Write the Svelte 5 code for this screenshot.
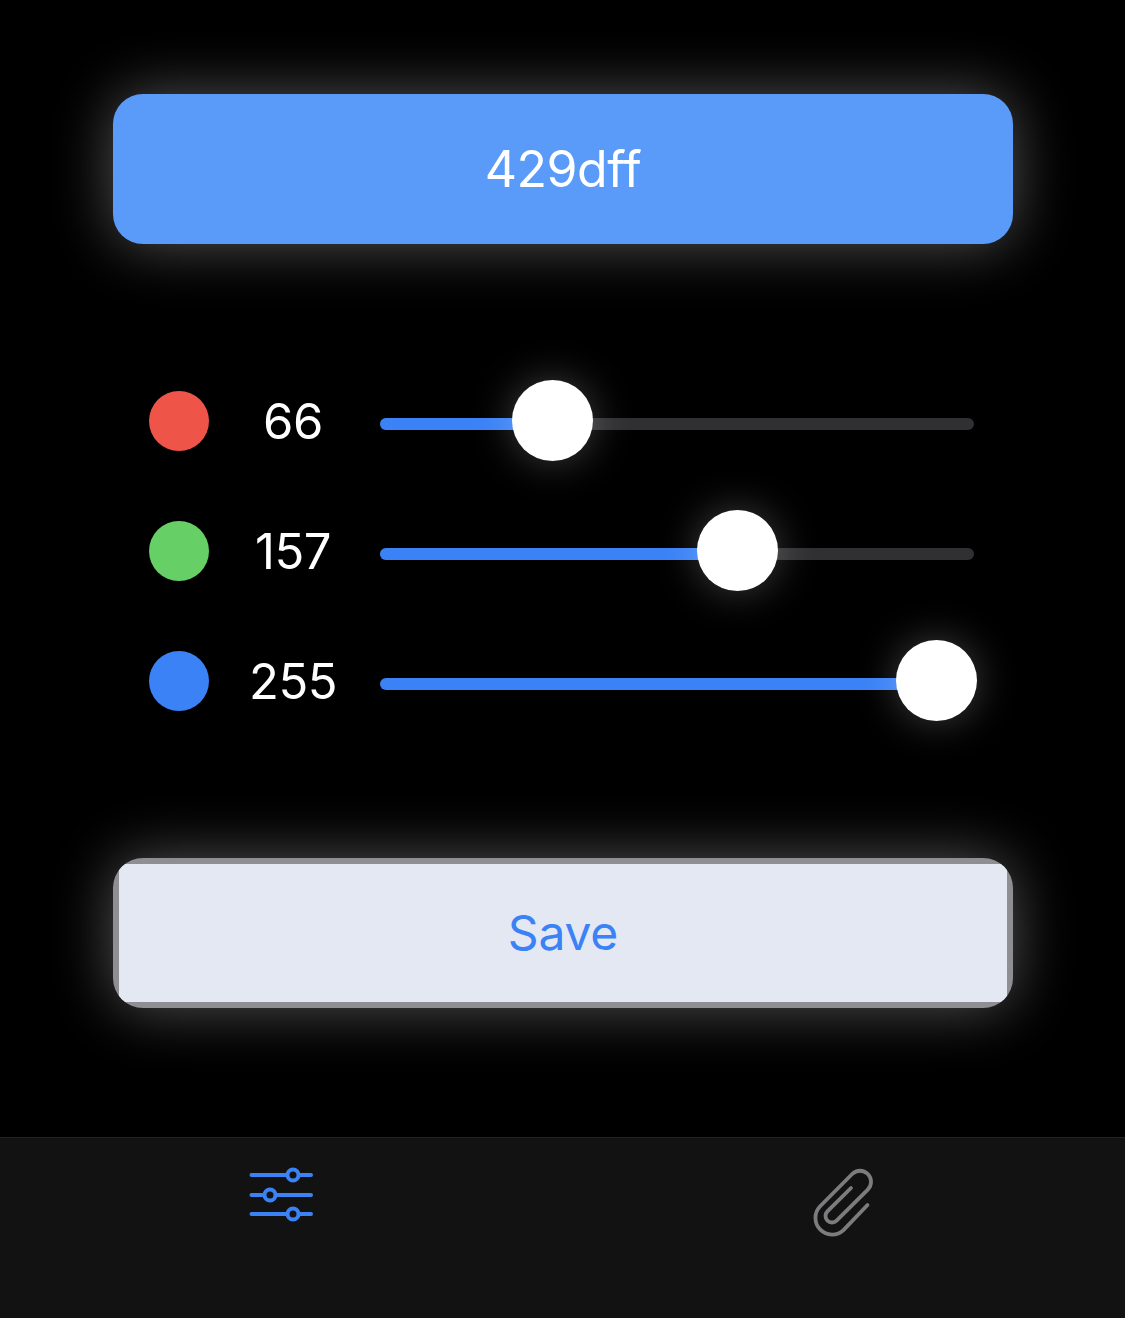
<script>
  const channels = [
    { name: 'red', value: 66, color: '#ee5548' },
    { name: 'green', value: 157, color: '#66d066' },
    { name: 'blue', value: 255, color: '#3b82f6' },
  ];
  const hex = channels.map((c) => c.value.toString(16).padStart(2, '0')).join('');
  const pct = (v) => (v / 255) * 100;
</script>

<div class="screen">
  <main class="content">
    <div class="swatch">{hex}</div>

    <div class="rows">
      {#each channels as ch}
        <div class="row">
          <span class="dot" style="background: {ch.color}"></span>
          <span class="value">{ch.value}</span>
          <div class="slider">
            <div class="track">
              <div class="fill" style="width: {pct(ch.value)}%"></div>
            </div>
            <div class="rail">
              <span class="thumb" style="left: {pct(ch.value)}%"></span>
            </div>
          </div>
        </div>
      {/each}
    </div>

    <button class="save"><span class="save-inner">Save</span></button>
  </main>

  <nav class="tabs">
    <div class="tab">
      <svg width="66" height="58" viewBox="0 0 66 58" fill="none" stroke="#3b82f6" stroke-width="4" stroke-linecap="round">
        <path d="M3.500 9H39M51 9H63M3.500 29H16M28 29H63M3.500 48H39M51 48H63" />
        <circle cx="45" cy="9" r="5.500" />
        <circle cx="22" cy="29" r="5.500" />
        <circle cx="45" cy="48" r="5.500" />
      </svg>
    </div>
    <div class="tab clip">
      <svg width="120" height="110" viewBox="0 0 120 110" fill="none" stroke="#7c7c7e" stroke-width="3.800" stroke-linecap="round">
        <path d="M87.500 65L63.500 90.100A16.700 16.700 0 0 1 39.900 66.500L72.200 34A11 11 0 0 1 87.800 49.600L56.600 80.600A6.500 6.500 0 0 1 47.400 71.400L71 48" />
      </svg>
    </div>
  </nav>
</div>

<style>
  :global(body) {
    margin: 0;
    background: #000;
  }

  .screen {
    width: 1125px;
    height: 1318px;
    display: flex;
    flex-direction: column;
    background: #000;
    font-family: Inter, "Liberation Sans", sans-serif;
    color: #fff;
    overflow: hidden;
  }

  .content {
    height: 1137px;
    box-sizing: border-box;
    padding: 94px 112px 0 113px;
    display: flex;
    flex-direction: column;
  }

  .swatch {
    height: 150px;
    border-radius: 30px;
    background: #5a9bf9;
    box-shadow: 0 0 60px rgba(255, 255, 255, 0.33);
    display: flex;
    align-items: center;
    justify-content: center;
    font-size: 50px;
    font-weight: 400;
    letter-spacing: -0.5px;
  }

  .rows {
    margin-top: 147px;
    display: flex;
    flex-direction: column;
    gap: 70px;
  }

  .row {
    height: 60px;
    display: flex;
    align-items: center;
    padding-left: 36px;
  }

  .dot {
    width: 60px;
    height: 60px;
    border-radius: 50%;
    flex: none;
  }

  .value {
    width: 100px;
    margin: 0 37px 0 34px;
    flex: none;
    text-align: center;
    font-size: 49px;
    font-weight: 400;
    letter-spacing: -0.5px;
  }

  .slider {
    position: relative;
    width: 594px;
    height: 60px;
  }

  .track {
    position: absolute;
    left: 0;
    right: 0;
    top: 27px;
    height: 12px;
    border-radius: 6px;
    background: #303033;
    overflow: hidden;
  }

  .fill {
    height: 100%;
    background: #3b82f6;
  }

  .rail {
    position: absolute;
    left: 38.500px;
    width: 518px;
    top: 0;
    height: 60px;
  }

  .thumb {
    position: absolute;
    top: -11px;
    width: 81px;
    height: 81px;
    margin-left: -40.500px;
    border-radius: 50%;
    background: #fff;
    box-shadow: 0 0 40px rgba(255, 255, 255, 0.25);
  }

  .save {
    margin-top: 147px;
    height: 150px;
    padding: 6px;
    border: 0;
    border-radius: 30px;
    overflow: hidden;
    background: #8e8e93;
    box-shadow: 0 0 60px rgba(255, 255, 255, 0.33);
    font: inherit;
    display: flex;
  }

  .save-inner {
    flex: 1;
    background: #e4e8f3;
    color: #3b82f6;
    font-size: 48px;
    font-weight: 400;
    letter-spacing: -0.2px;
    padding-bottom: 2px;
    display: flex;
    align-items: center;
    justify-content: center;
  }

  .tabs {
    flex: 1;
    background: #121212;
    border-top: 1px solid #222;
    position: relative;
  }

  .tab {
    position: absolute;
    left: 248px;
    top: 28px;
    display: flex;
  }

  .tab.clip {
    left: 780px;
    top: 2px;
  }
</style>
